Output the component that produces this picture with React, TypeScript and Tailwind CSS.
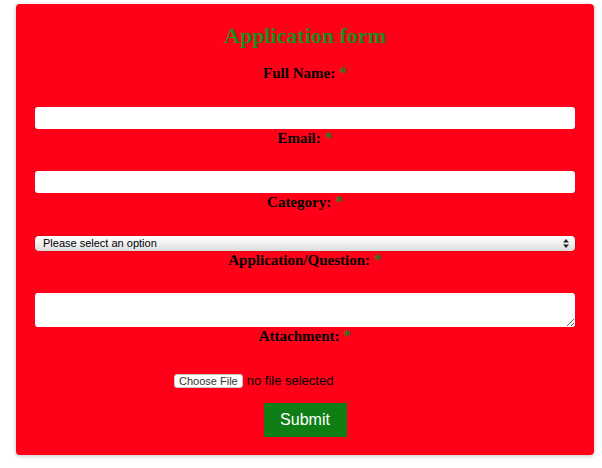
import React from 'react';

function Field({ label, children, gap }: { label: string; children: React.ReactNode; gap: string }) {
  return (
    <div className="flex flex-col">
      <label className={`block text-center text-[15px] leading-[18px] font-bold text-black ${gap}`}>
        {label} <span className="text-[#2b7a23] text-[16px]">*</span>
      </label>
      {children}
    </div>
  );
}

export default function App() {
  return (
    <div className="w-[602px] h-[468px] bg-white pt-[4px] px-[16px] font-['Liberation_Serif',serif]">
      <form
        className="w-[578px] bg-[#ff0018] rounded-[4px] shadow-[0_1px_4px_rgba(0,0,0,0.25)] px-[19px] pt-[19px] pb-[18px] flex flex-col"
        onSubmit={(e) => e.preventDefault()}
      >
        <h3 className="text-center text-[22px] leading-[26px] font-bold text-[#1c8a1c] mb-[15px]">
          Application form
        </h3>

        <Field label="Full Name:" gap="mb-[25px]">
          <input type="text" className="h-[22px] w-full bg-white rounded-[3px] outline-none" />
        </Field>

        <Field label="Email:" gap="mb-[24px]">
          <input type="email" className="h-[22px] w-full bg-white rounded-[3px] outline-none" />
        </Field>

        <Field label="Category:" gap="mb-[25px]">
          <div className="relative h-[15px] w-full rounded-[4px] bg-gradient-to-b from-[#ffffff] via-[#f1f1f1] to-[#dcdcdc] shadow-[0_0_0_0.5px_rgba(0,0,0,0.2)]">
            <span className="absolute left-[8px] top-0 text-[11px] leading-[15px] text-black font-['Liberation_Sans',sans-serif]">
              Please select an option
            </span>
            <svg className="absolute right-[6px] top-[3px]" width="6" height="9" viewBox="0 0 6 9">
              <path d="M3 0L6 3.5H0Z" fill="#222" />
              <path d="M3 9L0 5.5H6Z" fill="#222" />
            </svg>
          </div>
        </Field>

        <Field label="Application/Question:" gap="mb-[24px]">
          <textarea className="h-[34px] w-full bg-white rounded-[3px] outline-none block" />
        </Field>

        <Field label="Attachment:" gap="mb-[29px]">
          <div className="w-[262px] self-center flex items-center gap-[4px] font-['Liberation_Sans',sans-serif]">
            <span className="h-[14px] px-[4px] bg-white rounded-[3px] border border-[#c8c8c8] text-[11px] leading-[12px] text-[#333] flex items-center">
              Choose File
            </span>
            <span className="text-[13px] leading-[14px] text-black">no file selected</span>
          </div>
        </Field>

        <button
          type="submit"
          className="self-center mt-[15px] w-[83px] h-[34px] bg-[#0f7f15] text-white text-[16px] font-['Liberation_Sans',sans-serif]"
        >
          Submit
        </button>
      </form>
    </div>
  );
}
